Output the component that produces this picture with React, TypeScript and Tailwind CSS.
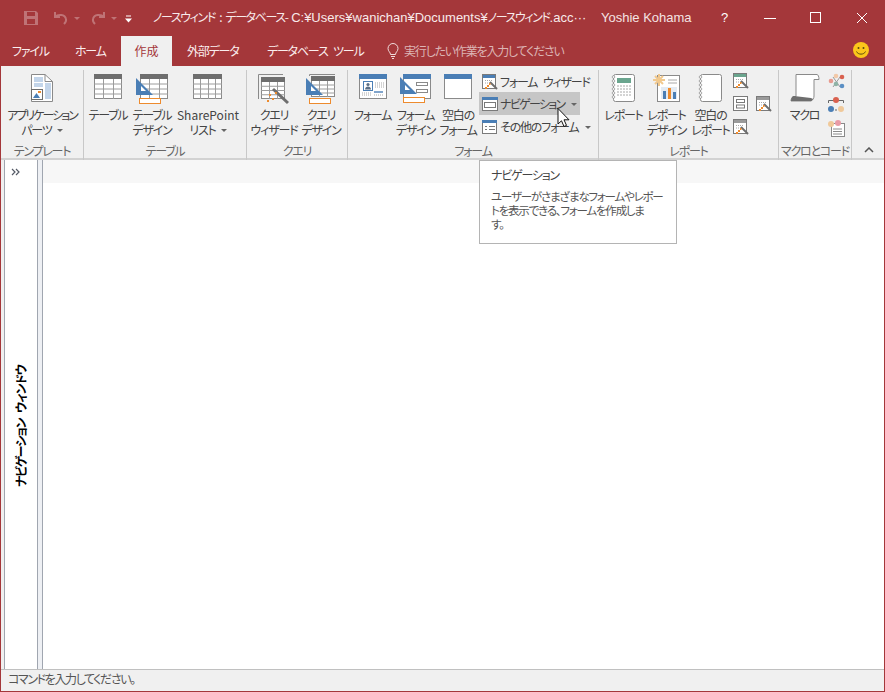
const FONT = "font-['Noto_Sans_CJK_JP','Noto_Sans',sans-serif] [font-feature-settings:'palt'] tracking-[-1.2px] [word-spacing:4px]";

const GridTable = ({ x = 0, y = 0, w = 28, h = 25, cols = 3, head = "#6e6e6e" }) => (
  <g>
    <rect x={x + 0.5} y={y + 0.5} width={w - 1} height={h - 1} fill="#fff" stroke="#8a8a8a" />
    <rect x={x} y={y} width={w} height={5} fill={head} />
    {[1, 2, 3].map((i) => (
      <line key={i} x1={x} x2={x + w} y1={y + 5.5 + (i * (h - 5)) / 4 - 0.5} y2={y + 5.5 + (i * (h - 5)) / 4 - 0.5} stroke="#9c9c9c" />
    ))}
    {Array.from({ length: cols - 1 }).map((_, i) => (
      <line key={i} y1={y + 5} y2={y + h} x1={x + Math.round(((i + 1) * w) / cols) + 0.5} x2={x + Math.round(((i + 1) * w) / cols) + 0.5} stroke="#9c9c9c" />
    ))}
  </g>
);

const Square = ({ x = 0, y = 0 }) => (
  <g>
    <path d={`M${x} ${y + 1}L${x + 17} ${y + 18}H${x}Z`} fill="#4a7eb5" />
    <path d={`M${x + 5} ${y + 9}L${x + 10} ${y + 14}H${x + 5}Z`} fill="#fff" />
    <rect x={x + 3.5} y={y + 21.5} width={21} height={5} fill="#fff" stroke="#ed8b2e" />
  </g>
);

const Wand = ({ x = 0, y = 0 }) => (
  <g>
    <path d={`M${x} ${y}L${x + 15} ${y + 14}`} stroke="#6e6e6e" strokeWidth="3" />
    <path d={`M${x - 4} ${y + 5}h2v2h-2zM${x - 1} ${y + 9}h2v2h-2zM${x - 6} ${y + 11}h2v2h-2zM${x + 2} ${y + 3}h2v2h-2z`} fill="#ed8b2e" />
  </g>
);

const Svg = ({ w = 32, h = 32, children }: { w?: number; h?: number; children: React.ReactNode }) => (
  <svg width={w} height={h} viewBox={`0 0 ${w} ${h}`} className="shrink-0">{children}</svg>
);

const AppIcon = () => (
  <Svg w={24} h={30}>
    <path d="M1.500 .5H15L22.500 7.500V27.500H1.500Z" fill="#fff" stroke="#8a8a8a" />
    <path d="M15 .5V7.500H22.500" fill="none" stroke="#8a8a8a" />
    <rect x="4" y="3" width="9" height="5" fill="#c3d5ea" />
    <rect x="15" y="9" width="6" height="16" fill="#c3d5ea" />
    <rect x="4" y="9" width="9" height="4" fill="#c3d5ea" />
    <rect x="1.500" y="15.500" width="11" height="10" fill="#fff" stroke="#6e6e6e" />
    <path d="M3 24L6.500 19L10 24Z" fill="#4a7eb5" />
    <rect x="8" y="17" width="3" height="2" fill="#ed8b2e" />
  </Svg>
);

const FormIcon = () => (
  <Svg w={28} h={26}>
    <rect x=".5" y=".5" width="27" height="24" fill="#fff" stroke="#8a8a8a" />
    <rect width="28" height="5" fill="#4a7eb5" />
    <rect x="4.500" y="7.500" width="9" height="9" fill="#fff" stroke="#4a7eb5" />
    <circle cx="9" cy="10.500" r="1.600" fill="#5a6f86" />
    <path d="M6 15.500c0-4 6-4 6 0z" fill="#5a6f86" />
    <path d="M16 9h9M16 11h9M16 13h9M3 19h9M15 21h9M3 21h9" stroke="#a8a8a8" strokeDasharray="1 1" />
    <rect x="15" y="17" width="9" height="2" fill="#4a7eb5" opacity=".7" />
  </Svg>
);

const FormDesignIcon = () => (
  <Svg w={32} h={29}>
    <rect x="3.500" y=".5" width="27" height="24" fill="#fff" stroke="#8a8a8a" />
    <rect x="3" width="28" height="5" fill="#4a7eb5" />
    <rect x="16.500" y="8.500" width="11" height="3" fill="#fff" stroke="#8a8a8a" />
    <rect x="16.500" y="15.500" width="11" height="3" fill="#fff" stroke="#8a8a8a" />
    <Square x={0} y={2} />
  </Svg>
);

const BlankFormIcon = () => (
  <Svg w={28} h={26}>
    <rect x=".5" y=".5" width="27" height="24" fill="#fff" stroke="#8a8a8a" />
    <rect width="28" height="5" fill="#4a7eb5" />
  </Svg>
);

const Notebook = ({ children }: { children?: React.ReactNode }) => (
  <Svg w={26} h={30}>
    <rect x="2.500" y=".5" width="21" height="27" rx="2" fill="#fff" stroke="#8a8a8a" />
    {[3, 7, 11, 15, 19, 23].map((y) => (
      <circle key={y} cx="2.500" cy={y} r="1.300" fill="#fff" stroke="#8a8a8a" strokeWidth=".7" />
    ))}
    {children}
  </Svg>
);

const MiniWizard = ({ blue = false, teal = false }) => (
  <Svg w={16} h={16}>
    <rect x=".5" y=".5" width="13" height="14" fill="#fff" stroke="#7a7a7a" />
    <rect x="1" y="1" width="12" height="3" fill={blue ? "#4a7eb5" : teal ? "#6aa58e" : "#9a9a9a"} />
    <path d="M3 6.500h8M3 9h5" stroke="#a8a8a8" strokeDasharray="1 1" />
    <path d="M8 8l7 7" stroke="#6e6e6e" strokeWidth="2" />
    <path d="M5 11h2v2H5zM7 9h1.500v2H7zM3 13h2v2H3z" fill="#ed8b2e" />
  </Svg>
);

const Caret = () => <span className="ml-[5px] mt-[1px] w-0 h-0 border-x-[3px] border-x-transparent border-t-[3px] border-t-[#666]" />;

const BigButton = ({ w, icon, lines, arrow = false }: { w: number; icon: React.ReactNode; lines: string[]; arrow?: boolean }) => (
  <div className="flex flex-col items-center shrink-0" style={{ width: w }}>
    <div className="h-[33px] flex items-start justify-center">{icon}</div>
    {lines.map((l, i) => (
      <div key={l} className={`h-[15px] leading-[15px] whitespace-nowrap flex items-center ${l === "SharePoint" ? "tracking-normal" : l === "アプリケーション" ? "tracking-[-2px]" : ""}`}>
        {l}
        {arrow && i === lines.length - 1 && <Caret />}
      </div>
    ))}
  </div>
);

const Group = ({ w, label, children }: { w: number; label: string; children: React.ReactNode }) => (
  <div className="shrink-0 h-[90px] flex flex-col border-r border-[#c8c8c8]" style={{ width: w }}>
    <div className="h-[74px] flex pt-[4px]">{children}</div>
    <div className="flex-1 text-center leading-[14px] text-[#666]">{label}</div>
  </div>
);

const SmallRow = ({ icon, label, active, caret }: { icon: React.ReactNode; label: string; active?: boolean; caret?: boolean }) => (
  <div className={`h-[23px] flex items-center pl-[3px] gap-[2px] whitespace-nowrap w-[101px] ${active ? "bg-[#c6c6c6] tracking-[-1.700px]" : ""}`}>
    {icon}
    {label}
    {caret && <Caret />}
  </div>
);

const NavIcon = () => (
  <Svg w={16} h={14}>
    <rect x=".5" y=".5" width="15" height="13" fill="#fff" stroke="#7a7a7a" />
    <rect x="0" y="0" width="16" height="3" fill="#4a7eb5" />
    <rect x="2.500" y="5.500" width="11" height="5" fill="#fff" stroke="#7a7a7a" />
  </Svg>
);

const OtherFormIcon = () => (
  <Svg w={16} h={14}>
    <rect x=".5" y=".5" width="14" height="13" fill="#fff" stroke="#7a7a7a" />
    <rect width="15" height="3" fill="#4a7eb5" />
    <path d="M3 6.500h2M7 6.500h6M3 9.500h2M7 9.500h6" stroke="#7a7a7a" />
  </Svg>
);

export default function App() {
  return (
    <div className={`relative w-[885px] h-[692px] overflow-hidden bg-[#a4373a] text-[12px] px-px pb-[2px] ${FONT}`}>
      {/* title bar */}
      <div className="h-[36px] flex items-center text-white">
        <div className="w-[151px] flex items-center shrink-0">
          <svg width="16" height="16" viewBox="0 0 16 16" className="ml-[22px] opacity-30">
            <path d="M1 1h12l2 2v12H1z M4 2v4h8V2z M4 9v5h8V9z" fill="#fff" fillRule="evenodd" />
          </svg>
          <svg width="18" height="16" viewBox="0 0 18 16" className="ml-[13px] opacity-30" fill="none" stroke="#fff" strokeWidth="2">
            <path d="M3 2v5h5M3 7c3-3 10-3 11 2c.5 2-1 4-2 5" />
          </svg>
          <span className="ml-[4px] opacity-30 w-0 h-0 border-x-[3px] border-x-transparent border-t-[3px] border-t-white" />
          <svg width="18" height="16" viewBox="0 0 18 16" className="ml-[9px] opacity-30" fill="none" stroke="#fff" strokeWidth="2">
            <path d="M15 2v5h-5M15 7c-3-3-10-3-11 2c-.5 2 1 4 2 5" />
          </svg>
          <span className="ml-[4px] opacity-30 w-0 h-0 border-x-[3px] border-x-transparent border-t-[3px] border-t-white" />
          <svg width="7" height="8" viewBox="0 0 7 8" className="ml-[8px] mt-[2px]">
            <path d="M1 .5h5v1H1zM0 3.500h7L3.500 7.500z" fill="#fff" />
          </svg>
        </div>
        <div className="w-[449px] pl-[1px] whitespace-nowrap overflow-hidden text-[#f8eaea] tracking-[-1.400px] [word-spacing:3px]">
          ノースウィンド : データベース-
          <span className="tracking-normal [word-spacing:0] text-[13px] font-['Liberation_Sans']"> C:¥Users¥wanichan¥Documents¥</span>
          ノースウィンド
          <span className="tracking-normal [word-spacing:0] text-[13px] font-['Liberation_Sans']">.acc···</span>
        </div>
        <div className="w-[120px] tracking-normal [word-spacing:0] font-['Liberation_Sans'] text-[13px] text-[#f5e3e3]">Yoshie Kohama</div>
        <div className="w-[40px] tracking-normal font-['Liberation_Sans'] text-[13px]">?</div>
        <svg width="12" height="12" viewBox="0 0 12 12" className="ml-[3px]"><path d="M0 6.500h12" stroke="#fff" /></svg>
        <svg width="12" height="12" viewBox="0 0 12 12" className="ml-[34px]"><rect x=".5" y=".5" width="10" height="10" fill="none" stroke="#fff" /></svg>
        <svg width="12" height="12" viewBox="0 0 12 12" className="ml-[34px]"><path d="M1 1l10 10M11 1L1 11" stroke="#fff" /></svg>
      </div>

      {/* tabs */}
      <div className="h-[30px] flex items-stretch text-[#fbeeee] relative">
        <div className="w-[11px]" />
        <div className="w-[63px] leading-[29px]">ファイル</div>
        <div className="w-[46px] leading-[29px]">ホーム</div>
        <div className="w-[51px] bg-[#f0f0f0] text-center text-[#a4373a] leading-[29px] tracking-normal">作成</div>
        <div className="w-[15px]" />
        <div className="w-[80px] leading-[29px]">外部データ</div>
        <div className="w-[119px] leading-[29px]">データベース ツール</div>
        <svg width="14" height="18" viewBox="0 0 14 18" className="mt-[6px]" fill="none" stroke="#f1dcdc">
          <path d="M4.500 12.500c0-2.500-2.500-3-2.500-6a5 5 0 0 1 10 0c0 3-2.500 3.500-2.500 6zM5 14.500h4M6 16.500h2" />
        </svg>
        <div className="ml-[4px] leading-[29px] text-[#dcb4b4]">実行したい作業を入力してください</div>
        <svg width="16" height="16" viewBox="0 0 16 16" className="absolute left-[852px] top-[6px]">
          <circle cx="8" cy="8" r="8" fill="#fbc71b" />
          <circle cx="5.500" cy="6" r="1" fill="#5a4a10" />
          <circle cx="10.500" cy="6" r="1" fill="#5a4a10" />
          <path d="M3.500 9.500c1.500 3.500 7.500 3.500 9 0" fill="none" stroke="#5a4a10" />
        </svg>
      </div>

      {/* ribbon */}
      <div className="h-[94px] bg-[#f0f0f0] border-b-2 border-[#d2d2d2] flex pt-[4px] text-[#444] relative">
        <Group w={83} label="テンプレート">
          <BigButton w={82} icon={<AppIcon />} lines={["アプリケーション", "パーツ"]} arrow />
        </Group>
        <Group w={163} label="テーブル">
          <div className="w-[2px]" />
          <BigButton w={44} icon={<Svg w={28} h={26}><GridTable /></Svg>} lines={["テーブル"]} />
          <BigButton w={44} icon={<Svg w={32} h={30}><GridTable x={4} /><Square x={0} y={3} /></Svg>} lines={["テーブル", "デザイン"]} />
          <BigButton w={68} icon={<Svg w={30} h={26}><GridTable w={29} cols={4} /></Svg>} lines={["SharePoint", "リスト"]} arrow />
        </Group>
        <Group w={101} label="クエリ">
          <div className="w-[3px]" />
          <BigButton w={48} icon={<Svg w={32} h={32}><path d="M.5 25V.5H25" fill="none" stroke="#8a8a8a" /><GridTable x={3} y={3} w={24} h={22} /><Wand x={15} y={15} /></Svg>} lines={["クエリ", "ウィザード"]} />
          <BigButton w={46} icon={<Svg w={32} h={30}><path d="M4.500 2V.5H30" fill="none" stroke="#8a8a8a" /><GridTable x={6} y={2} w={24} h={21} /><Square x={1} y={3} /></Svg>} lines={["クエリ", "デザイン"]} />
        </Group>
        <Group w={251} label="フォーム">
          <div className="w-[3px]" />
          <BigButton w={43} icon={<FormIcon />} lines={["フォーム"]} />
          <BigButton w={43} icon={<FormDesignIcon />} lines={["フォーム", "デザイン"]} />
          <BigButton w={42} icon={<BlankFormIcon />} lines={["空白の", "フォーム"]} />
          <div className="flex flex-col -mt-[2px]">
            <div className="h-[20px] flex items-center pl-[3px] gap-[2px] whitespace-nowrap w-[112px]"><MiniWizard blue />フォーム ウィザード</div>
            <SmallRow icon={<NavIcon />} label="ナビゲーション" active caret />
            <SmallRow icon={<OtherFormIcon />} label="その他のフォーム" caret />
          </div>
        </Group>
        <Group w={180} label="レポート">
          <div className="w-[3px]" />
          <BigButton w={43} icon={<Notebook><rect x="6" y="4" width="14" height="5" fill="#6aa58e" /><path d="M6 12h14M6 15h14M6 18h14M6 21h14" stroke="#a8a8a8" strokeDasharray="2 1" /></Notebook>} lines={["レポート"]} />
          <BigButton w={43} icon={
            <Svg w={28} h={30}>
              <rect x="4.500" y="1.500" width="22" height="26" fill="#fff" stroke="#8a8a8a" />
              <path d="M6 0V12M0 6H12M2 2L10 10M10 2L2 10" stroke="#f1c98e" strokeWidth="2" />
              <path d="M15 6h9M15 9h9" stroke="#a8a8a8" />
              <rect x="8" y="13" width="16" height="12" fill="#e4ebf3" />
              <rect x="10" y="17" width="3" height="8" fill="#4a7eb5" />
              <rect x="15" y="14" width="3" height="11" fill="#ed8b2e" />
              <rect x="20" y="18" width="3" height="7" fill="#4a7eb5" />
            </Svg>
          } lines={["レポート", "デザイン"]} />
          <BigButton w={45} icon={<Notebook />} lines={["空白の", "レポート"]} />
          <div className="flex -mt-[1px] gap-[7px]">
            <div className="flex flex-col">
              <div className="h-[23px]"><MiniWizard teal /></div>
              <div className="h-[23px]"><Svg w={16} h={16}><rect x=".5" y=".5" width="14" height="14" fill="#fff" stroke="#7a7a7a" /><rect x="3.500" y="3.500" width="8" height="3" fill="#fff" stroke="#7a7a7a" /><rect x="3.500" y="9" width="8" height="3" fill="#fff" stroke="#7a7a7a" /></Svg></div>
              <MiniWizard />
            </div>
            <div className="pt-[23px]"><MiniWizard /></div>
          </div>
        </Group>
        <Group w={73} label="マクロとコード">
          <div className="w-[4px]" />
          <BigButton w={43} icon={
            <Svg w={30} h={30}>
              <path d="M6 .5H27c1 0 2 2 2 5h-5V22c0 2-1 4-3 5H1c0-2 1-4 3-4.500H6z" fill="#fff" stroke="#8a8a8a" />
              <path d="M1 27c0-3 1-5 3-5L21 24l2 1c-1 2-2 2-2 2z" fill="#6e6e6e" />
            </Svg>
          } lines={["マクロ"]} />
          <div className="flex flex-col pl-[1px] -mt-[1px]">
            <div className="h-[23px]">
              <Svg w={18} h={18}>
                <path d="M6 4L13 14M13 4L6 14" stroke="#9a9a9a" />
                <circle cx="4" cy="8" r="2.300" fill="#e89a8e" /><circle cx="9" cy="3" r="2.300" fill="#f2c9a8" /><circle cx="15" cy="4" r="2.300" fill="#d9614f" /><circle cx="9" cy="11" r="2.300" fill="#8fb3a6" /><circle cx="15" cy="13" r="2.300" fill="#5b8fc4" />
              </Svg>
            </div>
            <div className="h-[23px]">
              <Svg w={18} h={18}>
                <path d="M1.500 7V4.500h15V7M8 14h2" stroke="#666" fill="none" />
                <circle cx="9" cy="4" r="3" fill="#d9614f" /><circle cx="4" cy="13" r="3" fill="#4a7eb5" /><circle cx="14" cy="13" r="3" fill="#f0c99a" />
              </Svg>
            </div>
            <Svg w={18} h={18}>
              <rect x="4.500" y="4.500" width="13" height="13" fill="#fff" stroke="#8a8a8a" />
              <path d="M6 10h9M6 12.500h9M6 15h9" stroke="#8a8a8a" />
              <circle cx="4" cy="5" r="3" fill="#f0c99a" /><circle cx="11" cy="4" r="3" fill="#e99ba6" />
            </Svg>
          </div>
        </Group>
        <svg width="10" height="6" viewBox="0 0 10 6" className="absolute left-[863px] top-[81px]" fill="none" stroke="#555" strokeWidth="1.500">
          <path d="M1 5l4-4l4 4" />
        </svg>
      </div>

      {/* body */}
      <div className="h-[509px] flex bg-white">
        <div className="w-[3px] bg-[#f0f0f0]" />
        <div className="w-[34px] border-x border-[#a0a6b0] flex flex-col items-center">
          <svg width="9" height="8" viewBox="0 0 9 8" className="mt-[8px] -ml-[11px]" fill="none" stroke="#555a66" strokeWidth="1.200">
            <path d="M1 1l3 3l-3 3M5 1l3 3l-3 3" />
          </svg>
          <div className="flex-1 flex items-center justify-center w-full -ml-[1px]">
            <div className="w-0 flex justify-center mt-[6px]">
              <div className="-rotate-90 font-bold text-black whitespace-nowrap">ナビゲーション ウィンドウ</div>
            </div>
          </div>
        </div>
        <div className="w-[5px] bg-[#eef0f4] border-r border-[#a0a6b0]" />
        <div className="flex-1">
          <div className="h-[23px] bg-[#f7f7f7]" />
        </div>
      </div>

      {/* status bar */}
      <div className="h-[22px] bg-[#f0f0f0] border-t border-[#c0c0c0] pl-[7px] leading-[18px] text-[#555] tracking-[-1.400px]">コマンドを入力してください。</div>

      {/* tooltip */}
      <div className="absolute left-[479px] top-[160px] w-[198px] h-[84px] bg-white border border-[#b4b4b4] pl-[11px] pr-[8px] pt-[6px] text-[#555]">
        <div className="leading-[16px] text-[#444]">ナビゲーション</div>
        <div className="mt-[6px] leading-[14px] text-[11.500px] whitespace-nowrap">
          ユーザーがさまざまなフォームやレポー<br />トを表示できる、フォームを作成しま<br />す。
        </div>
      </div>

      {/* mouse pointer */}
      <svg width="14" height="20" viewBox="0 0 14 20" className="absolute left-[557px] top-[108px]">
        <path d="M1 .5V16L4.500 12.800L7 18.500L9.500 17.400L7 11.800H12Z" fill="#fff" stroke="#111" />
      </svg>
    </div>
  );
}
